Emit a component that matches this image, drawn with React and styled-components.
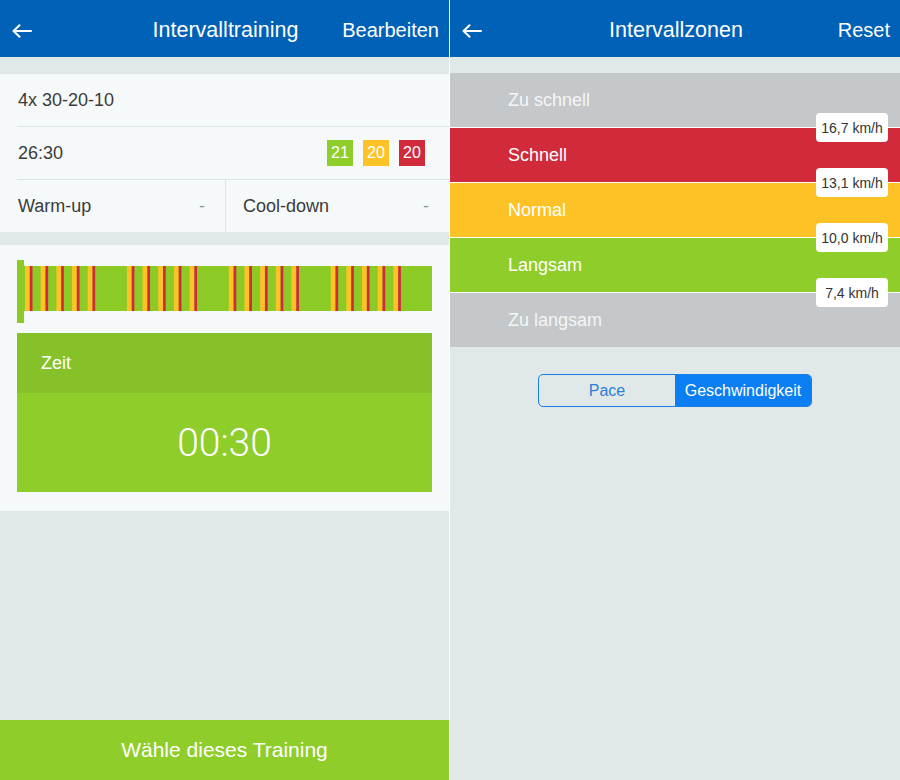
import React from "react";
import styled, { createGlobalStyle } from "styled-components";

const GREEN = "#8fcd2a";
const GREEN_DARK = "#87c12a";
const YELLOW = "#fdc326";
const RED = "#d12b3b";
const GREY_ZONE = "#c4c8ca";
const BLUE = "#0061b7";
const PAGE = "#e1e8e8";
const CARD = "#f6f9fa";
const LINE = "#dde3e4";

const GlobalStyle = createGlobalStyle`
  html, body {
    margin: 0;
    padding: 0;
    background: #ffffff;
  }
  body {
    font-family: "Liberation Sans", Arial, sans-serif;
    -webkit-font-smoothing: antialiased;
  }
  * { box-sizing: border-box; }
`;

const BackArrow = () => (
  <svg width="20" height="14" viewBox="0 0 20 14" fill="none">
    <path
      d="M1.5 7H19M7.5 1.2L1.5 7l6 5.8"
      stroke="#fff"
      strokeWidth="2"
      strokeLinecap="round"
      strokeLinejoin="round"
    />
  </svg>
);

// 4 reps of 5 x (slow / normal / fast), green background = slow
const IntervalChart = () => {
  const stripes = [];
  for (let g = 0; g < 4; g++) {
    for (let k = 0; k < 5; k++) {
      const x = 8 + g * 101.9 + k * 15.67;
      stripes.push(
        <rect key={`y${g}${k}`} x={x} y={6} width={4.8} height={45} fill={YELLOW} />
      );
      stripes.push(
        <rect key={`r${g}${k}`} x={x + 4.8} y={6} width={2.7} height={45} fill={RED} />
      );
    }
  }
  return (
    <ChartSvg width="415" height="63" viewBox="0 0 415 63">
      <rect x={0} y={0} width={7} height={63} fill="#8ccb26" />
      <rect x={7} y={6} width={408} height={45} fill="#8ccb26" />
      {stripes}
    </ChartSvg>
  );
};

const zones = [
  { label: "Zu schnell", bg: GREY_ZONE, color: "#f4f6f6", limit: "16,7 km/h" },
  { label: "Schnell", bg: RED, color: "#fff", limit: "13,1 km/h" },
  { label: "Normal", bg: YELLOW, color: "#fff", limit: "10,0 km/h" },
  { label: "Langsam", bg: GREEN, color: "#fff", limit: "7,4 km/h" },
  { label: "Zu langsam", bg: GREY_ZONE, color: "#f4f6f6" },
];

export default function App() {
  return (
    <>
      <GlobalStyle />
      <Screens>
        <Phone $w={449}>
          <NavBar>
            <BackButton>
              <BackArrow />
            </BackButton>
            <NavTitle>Intervalltraining</NavTitle>
            <NavAction>Bearbeiten</NavAction>
          </NavBar>

          <InfoCard>
            <Row>4x 30-20-10</Row>
            <Row>
              26:30
              <Counts>
                <Count $bg={GREEN}>21</Count>
                <Count $bg={YELLOW}>20</Count>
                <Count $bg={RED}>20</Count>
              </Counts>
            </Row>
            <SplitRow>
              <Cell>
                Warm-up<Dash>-</Dash>
              </Cell>
              <Cell $divider>
                Cool-down<Dash>-</Dash>
              </Cell>
            </SplitRow>
          </InfoCard>

          <ChartCard>
            <IntervalChart />
            <TimerBox>
              <TimerHead>Zeit</TimerHead>
              <TimerValue>00:30</TimerValue>
            </TimerBox>
          </ChartCard>

          <Filler />
          <SelectButton>Wähle dieses Training</SelectButton>
        </Phone>

        <Phone $w={450}>
          <NavBar>
            <BackButton>
              <BackArrow />
            </BackButton>
            <NavTitle>Intervallzonen</NavTitle>
            <NavAction>Reset</NavAction>
          </NavBar>

          <ZoneList>
            {zones.map((z) => (
              <Zone key={z.label} $bg={z.bg} $color={z.color}>
                {z.label}
                {z.limit && <Limit>{z.limit}</Limit>}
              </Zone>
            ))}
          </ZoneList>

          <Segmented>
            <Segment>Pace</Segment>
            <Segment $active>Geschwindigkeit</Segment>
          </Segmented>
        </Phone>
      </Screens>
    </>
  );
}

const Screens = styled.div`
  display: flex;
  width: 900px;
  height: 780px;
  gap: 1px;
  background: #ffffff;
`;

const Phone = styled.div`
  width: ${(p) => p.$w}px;
  flex: none;
  display: flex;
  flex-direction: column;
  background: ${PAGE};
  overflow: hidden;
`;

const NavBar = styled.header`
  height: 57px;
  flex: none;
  display: grid;
  grid-template-columns: 1fr auto 1fr;
  align-items: center;
  padding: 4px 10px 0 12px;
  background: ${BLUE};
  color: #fff;
`;

const BackButton = styled.span`
  justify-self: start;
  display: flex;
  align-items: center;
`;

const NavTitle = styled.h1`
  margin: 0;
  font-size: 21.5px;
  font-weight: 400;
`;

const NavAction = styled.span`
  justify-self: end;
  font-size: 20px;
`;

const InfoCard = styled.section`
  margin-top: 17px;
  background: ${CARD};
  color: #3b3b3b;
  font-size: 18px;
`;

const Row = styled.div`
  height: 53px;
  margin-left: 17px;
  padding: 0 24px 0 1px;
  display: flex;
  align-items: center;
  justify-content: space-between;
  border-bottom: 1px solid ${LINE};
`;

const Counts = styled.div`
  display: flex;
  gap: 10px;
`;

const Count = styled.span`
  width: 26px;
  height: 26px;
  display: flex;
  align-items: center;
  justify-content: center;
  background: ${(p) => p.$bg};
  color: #fff;
  font-size: 16px;
`;

const SplitRow = styled.div`
  height: 52px;
  display: grid;
  grid-template-columns: 225px 1fr;
`;

const Cell = styled.div`
  display: flex;
  align-items: center;
  justify-content: space-between;
  padding: 0 20px 0 ${(p) => (p.$divider ? 17 : 18)}px;
  border-left: ${(p) => (p.$divider ? `1px solid ${LINE}` : "none")};
`;

const Dash = styled.span`
  color: #9a9a9a;
`;

const ChartCard = styled.section`
  margin-top: 13px;
  padding: 15px 17px 19px;
  background: ${CARD};
`;

const ChartSvg = styled.svg`
  display: block;
`;

const TimerBox = styled.div`
  margin-top: 10px;
  display: flex;
  flex-direction: column;
`;

const TimerHead = styled.div`
  height: 60px;
  display: flex;
  align-items: center;
  padding-left: 24px;
  background: ${GREEN_DARK};
  color: #fff;
  font-size: 18px;
`;

const TimerValue = styled.div`
  height: 99px;
  display: flex;
  align-items: center;
  justify-content: center;
  background: ${GREEN};
  color: #fff;
  font-family: Roboto, "Liberation Sans", sans-serif;
  font-weight: 300;
  font-size: 39px;
`;

const Filler = styled.div`
  flex: 1;
`;

const SelectButton = styled.div`
  height: 60px;
  flex: none;
  display: flex;
  align-items: center;
  justify-content: center;
  background: ${GREEN};
  color: #fff;
  font-size: 21px;
`;

const ZoneList = styled.div`
  margin-top: 16px;
  display: flex;
  flex-direction: column;
`;

const Zone = styled.div`
  position: relative;
  height: 54px;
  display: flex;
  align-items: center;
  padding-left: 58px;
  background: ${(p) => p.$bg};
  color: ${(p) => p.$color};
  font-size: 18px;
  & + & {
    border-top: 1px solid #ffffff;
    height: 55px;
    padding-top: 1px;
  }
`;

const Limit = styled.span`
  position: absolute;
  right: 12px;
  bottom: -15px;
  z-index: 1;
  width: 72px;
  height: 29px;
  display: flex;
  align-items: center;
  justify-content: center;
  background: #ffffff;
  border-radius: 4px;
  color: #333;
  font-size: 14px;
`;

const Segmented = styled.div`
  align-self: center;
  margin-top: 27px;
  width: 274px;
  height: 33px;
  display: flex;
  border: 1px solid #1b7de6;
  border-radius: 5px;
  overflow: hidden;
`;

const Segment = styled.div`
  flex: 1;
  display: flex;
  align-items: center;
  justify-content: center;
  background: ${(p) => (p.$active ? "#0b7ef3" : "transparent")};
  color: ${(p) => (p.$active ? "#fff" : "#2b7fd6")};
  font-size: 16px;
`;
